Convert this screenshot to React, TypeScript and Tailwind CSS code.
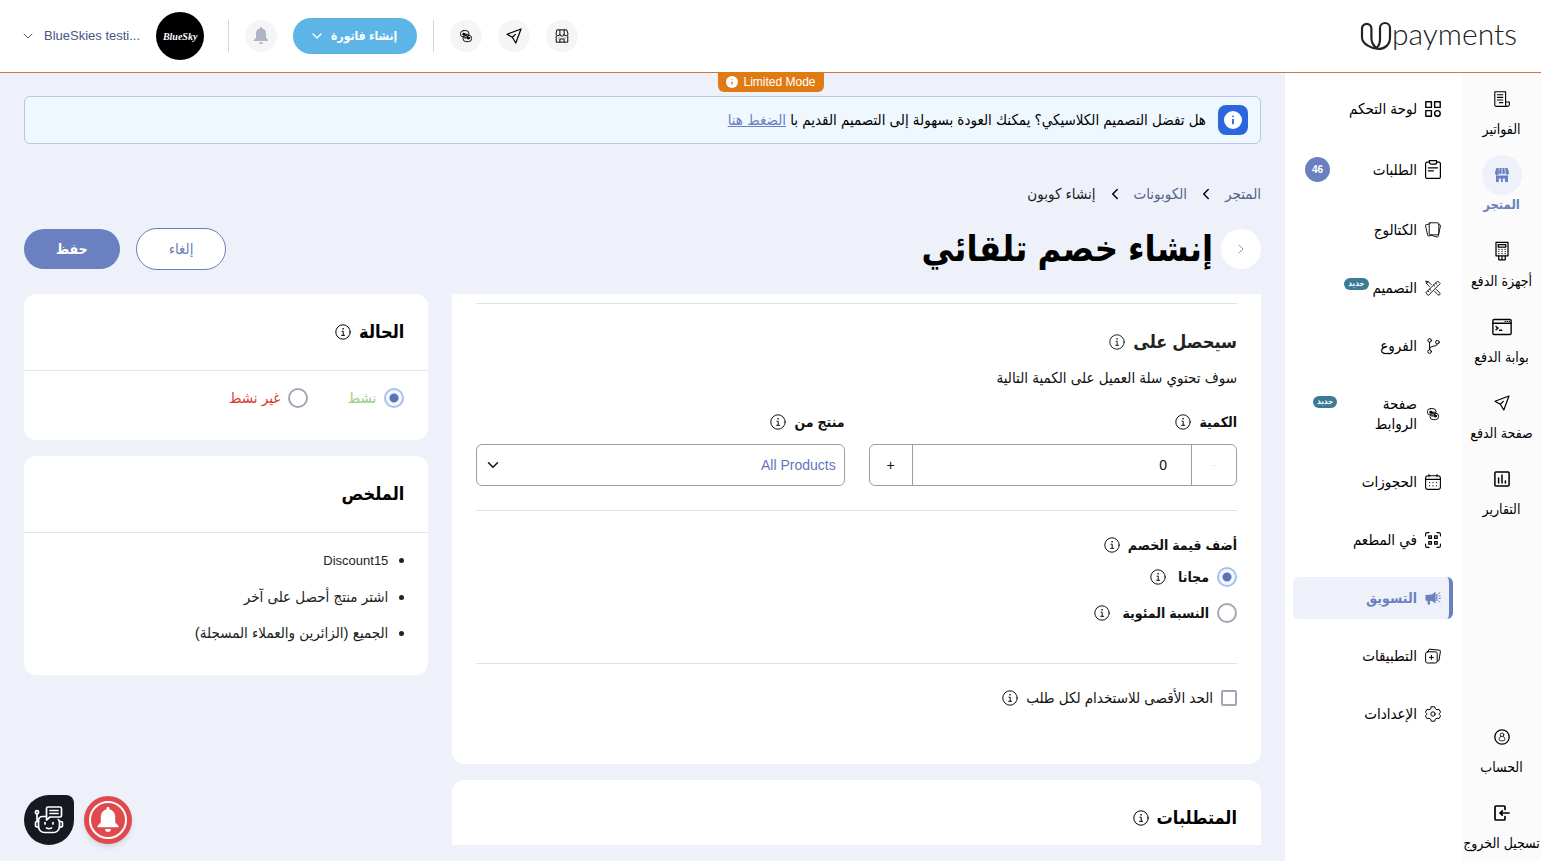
import React, { useState } from 'react';
import { clsx } from 'clsx';
import { ChevronDown, ChevronLeft, ChevronRight } from 'lucide-react';

type IconProps = { className?: string };

interface SvgProps extends IconProps {
  children: React.ReactNode;
  strokeWidth?: number;
}

// Shared 16x16 line icon frame
function Svg({ className = 'size-4', strokeWidth = 1.1, children }: SvgProps) {
  return (
    <svg
      viewBox="0 0 16 16"
      className={clsx('shrink-0', className)}
      fill="none"
      stroke="currentColor"
      strokeWidth={strokeWidth}
      strokeLinecap="round"
      strokeLinejoin="round"
      aria-hidden="true"
    >
      {children}
    </svg>
  );
}

const InvoiceIcon = () => (
  <Svg>
    <path d="M12 15.4H2.2A1.4 1.4 0 0 1 .8 14V.7h10.8v12.8a1.9 1.9 0 0 0 3.8 0V11h-3.8" />
    <path d="M3.4 3.8h5.4M3.4 6.4h5.4M3.4 9h5.4M5.4 11.6h3.4" />
  </Svg>
);

const StoreSolidIcon = () => (
  <Svg strokeWidth={0}>
    <path
      fill="currentColor"
      d="M2.4 1h2.4v5.2a1.7 1.7 0 0 1-3.7.2V5zM5.6 1h2v5.4a1.4 1.4 0 0 1-2.6-.4zM8.4 1h2l.6 5a1.4 1.4 0 0 1-2.6.4zM11.2 1h2.4l1.3 4v1.4a1.7 1.7 0 0 1-3.3 0zM2 8.6h12V15h-3v-3.6H8.8V15H7v-3.6H4.8V15H2z"
    />
  </Svg>
);

const StoreIcon = () => (
  <Svg className="size-[14px]">
    <path d="M2.6 1h10.8l1.4 4.2a2.2 2.2 0 0 1-4.4.6 2.4 2.4 0 0 1-4.8 0 2.2 2.2 0 0 1-4.4-.6z" />
    <path d="M5.6 5.8V1M10.4 5.8V1M1.4 8v7h13.200V8M5.600 15v-3.6h4.800V15M4.6 10.2h0M11.4 10.2h0" />
  </Svg>
);

const TerminalIcon = () => (
  <Svg className="size-5" strokeWidth={1}>
    <path d="M3.2 1h9.600v10.800H3.2zM5 2.800h6v2H5zM5.4 12V15h5.2v-3M8 12.6V15" />
    <path d="M5.500 6.700h0M8 6.700h0M10.5 6.700h0M5.5 8.400h0M8 8.400h0M10.5 8.400h0M5.500 10.100h0M8 10.100h0M10.5 10.100h0" />
  </Svg>
);

const GatewayIcon = () => (
  <Svg className="size-5">
    <rect x="0.7" y="2" width="14.6" height="12" rx="1" />
    <path d="M.7 5h14.6M3.2 7.6l1.6 1.3-1.6 1.3M6 10.6h1.8M10.6 3.5h0M12.2 3.5h0M13.8 3.5h0" />
  </Svg>
);

const SendIcon = () => (
  <Svg strokeWidth={1.2}>
    <path d="M15 1 1 6.2l5.3 3.1L9.8 15zM6.3 9.3 9.400 6.400" />
  </Svg>
);

const ReportsIcon = () => (
  <Svg strokeWidth={1.5}>
    <rect x="0.9" y="0.9" width="14.2" height="14.2" rx="1" />
    <path d="M4.6 7v5M8 4v8M11.4 10v2" />
  </Svg>
);

const AccountIcon = () => (
  <Svg strokeWidth={1.300}>
    <circle cx="8" cy="8" r="7.2" />
    <circle cx="8" cy="5.8" r="1.8" strokeWidth={0.8} />
    <path strokeWidth={0.8} d="M6.7 7.5c-1.3.8-1.7 2-1.5 3.3.1.8.8 1 2.8 1s2.7-.2 2.8-1c.2-1.3-.2-2.5-1.5-3.3" />
  </Svg>
);

const LogoutIcon = () => (
  <Svg strokeWidth={1.7}>
    <path d="M11 4.4V2a1 1 0 0 0-1-1H2a1 1 0 0 0-1 1v12a1 1 0 0 0 1 1h8a1 1 0 0 0 1-1v-2.4" />
    <path d="M15 8H6M8.3 5.8 6 8l2.3 2.2" />
  </Svg>
);

const DashboardIcon = () => (
  <Svg strokeWidth={1.4}>
    <path d="M.8.8h5.6v5.6H.8zM9.6.8h5.6v5.6H9.6zM.8 9.6h5.6v5.6H.8z" />
    <circle cx="12.4" cy="12.4" r="2.8" />
  </Svg>
);

const OrdersIcon = () => (
  <svg viewBox="0 0 16 19" className="h-[19px] w-4 shrink-0" fill="none" stroke="currentColor" strokeWidth="1.200" strokeLinecap="round" strokeLinejoin="round" aria-hidden="true">
    <path d="M4.400 2.200H2A1.400 1.400 0 0 0 .6 3.600V17A1.400 1.400 0 0 0 2 18.400h12a1.400 1.400 0 0 0 1.400-1.400V3.600A1.400 1.400 0 0 0 14 2.200h-2.400" />
    <path d="M4.400.6h7.200v1.600a2 2 0 0 1-2 2H6.400a2 2 0 0 1-2-2zM3.400 7.800h9.200M3.400 10.800h5" />
  </svg>
);

const CatalogIcon = () => (
  <Svg strokeWidth={0.9}>
    <path d="M5 .8h8a.8.8 0 0 1 .8.8v10.4a.8.8 0 0 1-.8.8H5a.8.8 0 0 1-.8-.8V1.600A.8.8 0 0 1 5 .8z" />
    <path d="M4.2 2 1 2.800a.6.6 0 0 0-.5.8l2.200 9.800a.8.8 0 0 0 1 .6l2-.6M13.8 2.600l1.300.4a.6.6 0 0 1 .4.8l-2.400 10.600a.8.8 0 0 1-1 .6l-5.600-1.600" />
  </Svg>
);

const DesignIcon = () => (
  <Svg strokeWidth={0.9}>
    <path d="m1 12.6 11.600-11.600 2.600 2.600L3.600 15.200zM10.600 3l1.300 1.300M8.600 5l1 1M4.600 9l1.300 1.300M2.800 10.800l1 1" />
    <path d="M6.200 4.600 3.400 1.800.8 1l.7 2.600 3 3M11.400 9.600l3.300 3.300a1.200 1.200 0 0 1-1.800 1.800L9.600 11.400M1.500 3.600l1.900-1.800" />
  </Svg>
);

const BranchIcon = () => (
  <Svg strokeWidth={1} className="h-[18px] w-4">
    <circle cx="4.6" cy="2.400" r="1.800" />
    <circle cx="4.6" cy="13.600" r="1.800" />
    <circle cx="12.4" cy="4.200" r="1.800" />
    <path d="M4.600 4.200v7.600c0-2.800 1.600-3.200 3.800-3.600 2.400-.4 3.600-.6 4-2.200" />
  </Svg>
);

const LinksIcon = () => (
  <Svg strokeWidth={0.9}>
    <rect x="2.400" y="2.600" width="8.600" height="6.400" rx="3" />
    <rect x="5" y="7.200" width="8.600" height="6.400" rx="3" />
    <path d="M5 6.200h5.200M6.600 10h5.200" />
    <circle cx="5.800" cy="6.200" r="1.100" fill="currentColor" />
    <circle cx="10.400" cy="10" r="1.100" fill="currentColor" />
  </Svg>
);

const CalendarIcon = () => (
  <Svg>
    <rect x="0.6" y="1.800" width="14.800" height="13.600" rx="2.400" />
    <path d="M.6 5.400h14.800M4 .6v2.200M12 .6v2.200" />
    <path strokeWidth={1.3} d="M4.600 8.600h0M8 8.600h0M11.400 8.600h0M4.600 11.800h0M8 11.800h0M11.400 11.800h0" />
  </Svg>
);

const QrIcon = () => (
  <Svg>
    <path d="M.6 4V2A1.400 1.400 0 0 1 2 .6h2M12 .6h2A1.400 1.400 0 0 1 15.400 2v2M15.400 12v2a1.400 1.400 0 0 1-1.400 1.400h-2M4 15.400H2A1.400 1.400 0 0 1 .6 14v-2" />
    <path strokeWidth={1.3} d="M3.800 3.800h2.600v2.600H3.800zM9.600 3.800h2.600v2.600H9.600zM3.800 9.600h2.600v2.600H3.800zM9.600 9.600h2.600v2.600H9.600z" />
  </Svg>
);

const MegaphoneIcon = () => (
  <Svg strokeWidth={0.9}>
    <path fill="currentColor" stroke="none" d="M10.600 1.800v11.600L7 11H5v3.600H2.600V11L.4 10.400V5L7 4.400zM11.200 4h1.200v7h-1.200z" />
    <path d="M13.600 3.600 15 2.600M14 6h1.400M14 8.400h1.400M13.600 11l1.400 1" />
  </Svg>
);

const AppsIcon = () => (
  <Svg strokeWidth={1}>
    <rect x="0.6" y="3.800" width="11.600" height="11.200" rx="2" />
    <path d="M3.200 3.600 3.600 2a1.200 1.200 0 0 1 1.300-.8l9.300 1a1.200 1.200 0 0 1 1.200 1.400l-1.400 8.600a1.200 1.200 0 0 1-1.400 1M6.400 7.400v4M4.400 9.400h4" />
  </Svg>
);

const SettingsIcon = () => (
  <Svg strokeWidth={1} className="h-[18px] w-4">
    <path d="M6.300.8h3.400l.6 2 1.700 1 2-.5 1.600 2.900-1.400 1.500v.6l1.400 1.500-1.600 2.900-2-.5-1.700 1-.6 2H6.300l-.6-2-1.700-1-2 .5L.4 9.800l1.400-1.500v-.6L.4 6.200 2 3.300l2 .5 1.700-1z" />
    <circle cx="8" cy="8" r="2.200" />
  </Svg>
);

const BellIcon = ({ className }: IconProps) => (
  <svg viewBox="0 0 16 18" className={className} fill="currentColor" aria-hidden="true">
    <path d="M8 0a1 1 0 0 1 1 1v.6a5 5 0 0 1 4 5v4.200l2.200 2.200v1H.8v-1L3 10.800V6.600a5 5 0 0 1 4-5V1a1 1 0 0 1 1-1zM6 15.300h4a2 2 0 0 1-4 0z" />
  </svg>
);

const InfoIcon = () => (
  <Svg strokeWidth={1}>
    <circle cx="8" cy="8" r="7.2" />
    <path d="M7 7.200h1.200v4M6.600 11.300h3" />
    <circle cx="8" cy="4.800" r="0.5" fill="currentColor" strokeWidth={0.5} />
  </Svg>
);

const InfoSolidIcon = ({ className }: IconProps) => (
  <svg viewBox="0 0 16 16" className={className} aria-hidden="true">
    <circle cx="8" cy="8" r="8" fill="#fff" />
    <path d="M8 7.200v4.600M8 4.200v1.200" stroke="currentColor" strokeWidth="1.600" />
  </svg>
);

const RobotIcon = () => (
  <svg viewBox="0 0 32 32" className="size-8" fill="none" stroke="#fff" strokeWidth="1.700" strokeLinecap="round" strokeLinejoin="round" aria-hidden="true">
    <path d="M13 12.500H9.500a4 4 0 0 0-4 4v6a6 6 0 0 0 6 6h9a6 6 0 0 0 6-6v-4a4 4 0 0 0-1.200-3" />
    <path d="M15 3h12a1.500 1.500 0 0 1 1.500 1.500v7A1.500 1.500 0 0 1 27 13H17l-3.500 3V4.500A1.500 1.500 0 0 1 15 3zM17 6.500h8M17 9.500h8" />
    <path d="M5.500 17.500H4A1.500 1.500 0 0 0 2.500 19v2.500A1.500 1.500 0 0 0 4 23h1.500M26.500 17.500H28a1.500 1.500 0 0 1 1.500 1.500v2.500A1.500 1.500 0 0 1 28 23h-1.500M4 17v-7" />
    <circle cx="4" cy="8.200" r="1.600" />
    <path d="M12 18.500v1.500M20 18.500v1.500M13.500 24c1.500.8 3.500.8 5 0" />
  </svg>
);

const railItems = [
  { label: 'الفواتير', icon: <InvoiceIcon /> },
  { label: 'المتجر', icon: <StoreSolidIcon />, active: true },
  { label: 'أجهزة الدفع', icon: <TerminalIcon /> },
  { label: 'بوابة الدفع', icon: <GatewayIcon /> },
  { label: 'صفحة الدفع', icon: <SendIcon /> },
  { label: 'التقارير', icon: <ReportsIcon /> },
];

const railFooter = [
  { label: 'الحساب', icon: <AccountIcon /> },
  { label: 'تسجيل الخروج', icon: <LogoutIcon /> },
];

interface NavItem {
  label: string;
  icon: React.ReactNode;
  active?: boolean;
  count?: number;
  badge?: 'inline' | 'end';
}

const navItems: NavItem[] = [
  { label: 'لوحة التحكم', icon: <DashboardIcon /> },
  { label: 'الطلبات', icon: <OrdersIcon />, count: 46 },
  { label: 'الكتالوج', icon: <CatalogIcon /> },
  { label: 'التصميم', icon: <DesignIcon />, badge: 'inline' },
  { label: 'الفروع', icon: <BranchIcon /> },
  { label: 'صفحة الروابط', icon: <LinksIcon />, badge: 'end' },
  { label: 'الحجوزات', icon: <CalendarIcon /> },
  { label: 'في المطعم', icon: <QrIcon /> },
  { label: 'التسويق', icon: <MegaphoneIcon />, active: true },
  { label: 'التطبيقات', icon: <AppsIcon /> },
  { label: 'الإعدادات', icon: <SettingsIcon /> },
];

function RailLink({ label, icon, active }: { label: string; icon: React.ReactNode; active?: boolean }) {
  return (
    <a
      href="#"
      className={clsx(
        'flex flex-col items-center leading-5 whitespace-nowrap',
        active ? 'text-[13px] font-bold text-[#6a80bf]' : 'text-[14px] text-black'
      )}
    >
      <span className={clsx('flex size-10 items-center justify-center rounded-full', active && 'bg-[#eef1f9]')}>
        {icon}
      </span>
      {label}
    </a>
  );
}

function NewBadge() {
  return (
    <span className="mb-2 rounded-full bg-[#3b7b96] px-1 text-[8px] leading-3 font-bold text-white">جديد</span>
  );
}

function NavLink({ label, icon, active, count, badge }: NavItem) {
  return (
    <a
      href="#"
      className={clsx(
        'flex items-center gap-2 rounded-md py-[11px] pe-3 leading-5',
        active
          ? 'border-s-4 border-[#6a80bf] bg-[#eef1f9] ps-2 text-[14px] font-bold text-[#6a80bf]'
          : 'ps-3 text-[15px] text-black'
      )}
    >
      {icon}
      <span className={clsx(badge === 'end' && 'w-16')}>{label}</span>
      {badge === 'inline' && (
        <span className="-ms-1 flex">
          <NewBadge />
        </span>
      )}
      {badge === 'end' && (
        <span className="ms-auto me-2 mb-4 flex">
          <NewBadge />
        </span>
      )}
      {count && (
        <span className="ms-auto flex size-[25px] items-center justify-center rounded-full bg-[#6a80bf] text-[10px] font-bold text-white">
          {count}
        </span>
      )}
    </a>
  );
}

function Logo() {
  return (
    <a href="#" dir="ltr" className="flex items-center text-[#222]" aria-label="Upayments">
      <svg viewBox="0 0 32 30" className="h-[30px] w-8" fill="none" stroke="currentColor" strokeWidth="2.200" strokeLinecap="round" aria-hidden="true">
        <path d="M20 7a5 5 0 0 1 10 0v9.500C30 23.500 25 28 18.500 28S2 23 2 16.500V7.500a4.700 4.700 0 0 1 9.400 0V17c0 5 2 8 6 10.500" />
        <path d="M20 7v11c0 4-1 7-3.500 9" />
      </svg>
      <span className="pb-1.5 font-['Lato',sans-serif] text-[30px] leading-9 font-light">payments</span>
    </a>
  );
}

function IconButton({ label, children }: { label: string; children: React.ReactNode }) {
  return (
    <button type="button" aria-label={label} className="flex size-8 items-center justify-center rounded-full bg-[#f5f5f6]">
      {children}
    </button>
  );
}

function Header() {
  return (
    <header className="relative flex h-[73px] shrink-0 items-center justify-between border-b border-[#d0793a] bg-white ps-6 pe-5">
      <Logo />
      <div className="flex items-center gap-4">
        <IconButton label="المتجر">
          <StoreIcon />
        </IconButton>
        <IconButton label="صفحة الدفع">
          <SendIcon />
        </IconButton>
        <IconButton label="صفحة الروابط">
          <LinksIcon />
        </IconButton>
        <span className="h-8 w-px bg-[#d5d7dd]" />
        <button type="button" className="flex h-9 items-center gap-1.5 rounded-full bg-[#5cb5e6] ps-5 pe-4 text-[12px] font-bold text-white">
          إنشاء فاتورة
          <ChevronDown className="size-4" />
        </button>
        <IconButton label="الإشعارات">
          <BellIcon className="h-[18px] w-4 text-[#b0b5c6]" />
        </IconButton>
        <span className="h-8 w-px bg-[#d5d7dd]" />
        <button type="button" className="ms-2 flex items-center gap-4 text-[13px] text-[#4a5584]">
          <span className="flex size-12 items-center justify-center rounded-full bg-black font-['Liberation_Serif',serif] text-[10px] font-bold text-white italic">
            BlueSky
          </span>
          <span className="flex items-center gap-2">
            <span dir="ltr">BlueSkies testi...</span>
            <ChevronDown className="size-4" strokeWidth={1.5} />
          </span>
        </button>
      </div>
      <div
        dir="ltr"
        className="absolute top-[72px] left-1/2 flex h-5 -translate-x-1/2 items-center gap-1.5 rounded-b-md bg-[#e07b14] px-2 text-[12px] whitespace-nowrap text-white"
      >
        <InfoSolidIcon className="size-3 text-[#e07b14]" />
        Limited Mode
      </div>
    </header>
  );
}

interface RadioProps {
  name: string;
  label: string;
  checked: boolean;
  onChange: () => void;
  className?: string;
}

function Radio({ name, label, checked, onChange, className }: RadioProps) {
  return (
    <label className={clsx('flex items-center gap-2 leading-5', className)}>
      <input
        type="radio"
        name={name}
        checked={checked}
        onChange={onChange}
        className="size-5 appearance-none rounded-full border-2 border-[#a3a6b5] bg-white checked:border-[#a9c0ea] checked:bg-[radial-gradient(circle,#5b74b8_4px,#f3f8ff_5px)]"
      />
      {label}
    </label>
  );
}

function DiscountForm() {
  const [quantity, setQuantity] = useState(0);
  const [kind, setKind] = useState('free');

  return (
    <div className="flex flex-col gap-4">
      <section className="rounded-b-xl bg-white px-6 pt-[9px] pb-14 text-[#111]">
        <hr className="border-[#dfe3ec]" />
        <h2 className="mt-6 flex items-center gap-2 text-[18px] leading-7 font-bold text-[#222]">
          سيحصل على <InfoIcon />
        </h2>
        <p className="mt-3 text-[15px] leading-5">سوف تحتوي سلة العميل على الكمية التالية</p>
        <div className="mt-6 grid grid-cols-2 gap-6 text-[14px]">
          <div>
            <label htmlFor="quantity" className="flex items-center gap-2 leading-5 font-bold">
              الكمية <InfoIcon />
            </label>
            <div className="mt-3 flex h-[42px] overflow-hidden rounded-md border border-[#9a9da6]">
              <button
                type="button"
                aria-label="إنقاص"
                disabled={quantity === 0}
                onClick={() => setQuantity(quantity - 1)}
                className="w-11 shrink-0 text-[#111] disabled:text-[#ececec]"
              >
                -
              </button>
              <input
                id="quantity"
                value={quantity}
                onChange={(e) => setQuantity(Number(e.target.value) || 0)}
                className="min-w-0 flex-1 border-x border-[#9a9da6] px-6 outline-none"
              />
              <button type="button" aria-label="زيادة" onClick={() => setQuantity(quantity + 1)} className="w-[42px] shrink-0">
                +
              </button>
            </div>
          </div>
          <div>
            <label htmlFor="product" className="flex items-center gap-2 leading-5 font-bold">
              منتج من <InfoIcon />
            </label>
            <div className="relative mt-3">
              <select
                id="product"
                className="h-[42px] w-full appearance-none rounded-md border border-[#9a9da6] bg-white px-2 text-[14px] text-[#6078b8]"
              >
                <option>All Products</option>
              </select>
              <ChevronDown className="pointer-events-none absolute top-3 left-2 size-[18px]" />
            </div>
          </div>
        </div>
        <hr className="mt-6 border-[#dfe3ec]" />
        <fieldset className="mt-6 text-[14px] font-bold">
          <legend className="flex items-center gap-2 leading-5">
            أضف قيمة الخصم <InfoIcon />
          </legend>
          <div className="mt-3 flex items-center gap-3">
            <Radio name="kind" label="مجانا" checked={kind === 'free'} onChange={() => setKind('free')} />
            <InfoIcon />
          </div>
          <div className="mt-4 flex items-center gap-3">
            <Radio name="kind" label="النسبة المئوية" checked={kind === 'percent'} onChange={() => setKind('percent')} />
            <InfoIcon />
          </div>
        </fieldset>
        <hr className="mt-10 border-[#dfe3ec]" />
        <div className="mt-6 flex items-center gap-2">
          <label className="flex items-center gap-2 text-[15px] leading-5">
            <input type="checkbox" className="size-4 appearance-none rounded-xs border-2 border-[#a3a6b5] bg-white checked:bg-[#6a80bf]" />
            الحد الأقصى للاستخدام لكل طلب
          </label>
          <InfoIcon />
        </div>
      </section>
      <section className="rounded-t-xl bg-white px-6 pt-6 pb-14">
        <h2 className="flex items-center gap-2 text-[18px] leading-7 font-bold">
          المتطلبات <InfoIcon />
        </h2>
      </section>
    </div>
  );
}

function Sidebar() {
  const [status, setStatus] = useState('active');

  return (
    <aside className="flex flex-col gap-4">
      <section className="rounded-xl bg-white">
        <h2 className="flex h-[77px] items-center gap-2 border-b border-[#e3e6ea] px-6 text-[18px] leading-7 font-bold">
          الحالة <InfoIcon />
        </h2>
        <div className="flex gap-7 px-6 pt-[17px] pb-8 text-[15px]">
          <Radio
            name="status"
            label="نشط"
            checked={status === 'active'}
            onChange={() => setStatus('active')}
            className="min-w-17 text-[#98cc88]"
          />
          <Radio
            name="status"
            label="غير نشط"
            checked={status === 'inactive'}
            onChange={() => setStatus('inactive')}
            className="text-[#d93a32]"
          />
        </div>
      </section>
      <section className="rounded-xl bg-white">
        <h2 className="flex h-[77px] items-center border-b border-[#e3e6ea] px-6 text-[18px] leading-7 font-bold">الملخص</h2>
        <ul className="list-disc space-y-4 px-10 pt-[17px] pb-8 text-[15px] leading-5 text-[#222]">
          <li>
            <span className="text-[13px]">Discount15</span>
          </li>
          <li>اشتر منتج أحصل على آخر</li>
          <li>الجميع (الزائرين والعملاء المسجلة)</li>
        </ul>
      </section>
    </aside>
  );
}

function App() {
  return (
    <div
      dir="rtl"
      lang="ar"
      className="flex h-screen flex-col overflow-hidden bg-[#eef1f9] font-['Liberation_Sans','DejaVu_Sans_Condensed','DejaVu_Sans',sans-serif] text-black"
    >
      <Header />
      <div className="flex min-h-0 flex-1">
        <nav className="flex w-[79px] shrink-0 flex-col gap-4 bg-[#fbfbfb] pt-[6px] pb-2">
          {railItems.map((item) => (
            <RailLink key={item.label} {...item} />
          ))}
          <div className="mt-auto flex flex-col gap-4">
            {railFooter.map((item) => (
              <RailLink key={item.label} {...item} />
            ))}
          </div>
        </nav>
        <nav className="flex w-[177px] shrink-0 flex-col gap-4 bg-white ps-[9px] pe-2 pt-[15px]">
          {navItems.map((item) => (
            <NavLink key={item.label} {...item} />
          ))}
        </nav>
        <main className="flex min-w-0 flex-1 flex-col px-6 pt-[23px] pb-4">
          <div className="flex h-12 shrink-0 items-center gap-3 rounded-md border border-[#b9c8e0] bg-[#f0f8ff] px-3 text-[15px]">
            <span className="flex size-[30px] items-center justify-center rounded-lg bg-[#2c66dd]">
              <InfoSolidIcon className="size-[18px] text-[#2c66dd]" />
            </span>
            <p>
              هل تفضل التصميم الكلاسيكي؟ يمكنك العودة بسهولة إلى التصميم القديم با{' '}
              <a href="#" className="text-[#6a80bf] underline">
                الضغط هنا
              </a>
            </p>
          </div>
          <nav className="mt-10 flex items-center gap-[10px] text-[15px] leading-5 text-[#56648f]">
            <a href="#">المتجر</a>
            <ChevronLeft className="size-[18px] text-black" />
            <a href="#">الكوبونات</a>
            <ChevronLeft className="size-[18px] text-black" />
            <span className="text-[#222]">إنشاء كوبون</span>
          </nav>
          <div className="mt-6 flex h-[42px] items-center justify-between">
            <div className="flex items-center gap-2">
              <button type="button" aria-label="رجوع" className="flex size-10 items-center justify-center rounded-full bg-white text-[#8f93a3]">
                <ChevronRight className="size-4" strokeWidth={1.5} />
              </button>
              <h1 className="text-[36px] leading-10 font-bold">إنشاء خصم تلقائي</h1>
            </div>
            <div className="flex items-center gap-4">
              <button type="button" className="h-[42px] rounded-full border border-[#6a7fb5] bg-white px-8 text-[15px] text-[#6a7fb5]">
                إلغاء
              </button>
              <button type="button" className="h-10 rounded-full bg-[#6a80bf] px-8 text-[14px] font-bold text-white">
                حفظ
              </button>
            </div>
          </div>
          <div className="mt-6 grid min-h-0 flex-1 grid-cols-[2fr_1fr] items-start gap-6 overflow-hidden">
            <DiscountForm />
            <Sidebar />
          </div>
        </main>
      </div>
      <div dir="ltr" className="fixed bottom-4 left-6 flex items-center gap-[10px]">
        <button type="button" aria-label="المساعد" className="flex size-[50px] items-center justify-center rounded-[25px] rounded-tr-lg bg-[#141a20]">
          <RobotIcon />
        </button>
        <button type="button" aria-label="التنبيهات" className="flex size-12 items-center justify-center rounded-full bg-[#e04a4f] shadow-md">
          <span className="flex size-[38px] items-center justify-center rounded-full border-2 border-white">
            <BellIcon className="size-[26px] text-white" />
          </span>
        </button>
      </div>
    </div>
  );
}

export default App;
